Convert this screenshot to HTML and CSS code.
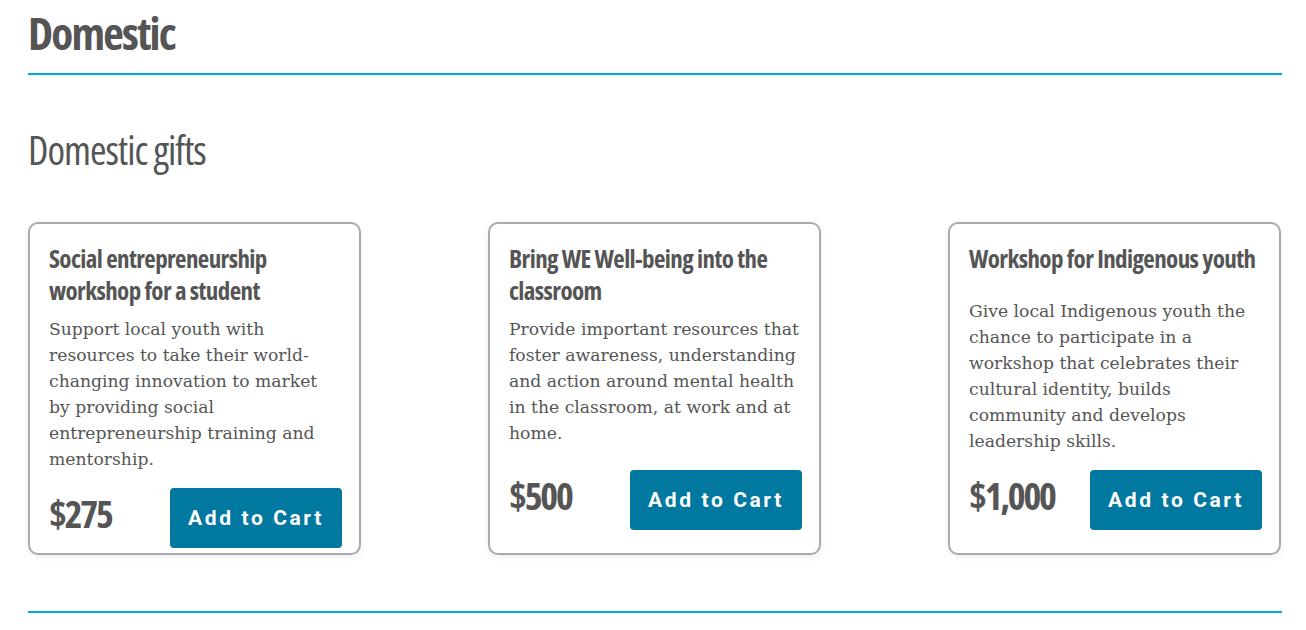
FILE: index.html
```html
<!DOCTYPE html>
<html lang="en">
<head>
    <meta charset="UTF-8">
    <meta name="viewport" content="width=device-width, initial-scale=1.0">
    <title>Domestic gifts</title>
    <link rel="stylesheet" href="styles.css">
</head>
<body>
    <div class="gifts-page">
        <h1 class="section-title">Domestic</h1>

        <h2 class="group-title">Domestic gifts</h2>

        <div class="gift-list">
            <div class="gift-card">
                <div class="gift-body">
                    <h3>Social entrepreneurship workshop for a student</h3>
                    <p>Support local youth with resources to take their world-changing innovation to market by providing social entrepreneurship training and mentorship.</p>
                </div>
                <div class="gift-footer">
                    <span class="price">$275</span>
                    <button class="add-btn">Add to Cart</button>
                </div>
            </div>

            <div class="gift-card">
                <div class="gift-body">
                    <h3>Bring WE Well-being into the classroom</h3>
                    <p>Provide important resources that foster awareness, understanding and action around mental health in the classroom, at work and at home.</p>
                </div>
                <div class="gift-footer">
                    <span class="price">$500</span>
                    <button class="add-btn">Add to Cart</button>
                </div>
            </div>

            <div class="gift-card">
                <div class="gift-body short-title">
                    <h3>Workshop for Indigenous youth</h3>
                    <p>Give local Indigenous youth the chance to participate in a workshop that celebrates their cultural identity, builds community and develops leadership skills.</p>
                </div>
                <div class="gift-footer">
                    <span class="price">$1,000</span>
                    <button class="add-btn">Add to Cart</button>
                </div>
            </div>
        </div>

        <div class="section-end"></div>
    </div>
</body>
</html>
```

FILE: styles.css
```css
body {
    margin: 0;
    font-family: "DejaVu Serif", serif;
    color: #555;
    background: #fff;
}
.gifts-page {
    padding: 0 24px 0 28px;
}
.section-title,
.group-title,
.gift-body h3,
.price {
    font-family: "Open Sans", sans-serif;
    font-stretch: 75%;
}
.section-title {
    margin: 0;
    padding: 6px 0 13px;
    font-size: 45px;
    font-weight: bold;
    line-height: 54px;
    letter-spacing: -1.8px;
    border-bottom: 2px solid #00a9e0;
}
.group-title {
    margin: 0;
    padding-top: 50px;
    font-size: 40px;
    font-weight: normal;
    line-height: 50px;
    letter-spacing: -1px;
}
.gift-list {
    display: flex;
    gap: 127px;
    margin-top: 47px;
}
.gift-card {
    width: 333px;
    box-sizing: border-box;
    border: 2px solid #aaa;
    border-radius: 10px;
    box-shadow: 0 2px 6px rgba(0,0,0,0.08);
    padding: 18px 17px 5px 19px;
}
.gift-body {
    min-height: 212px;
}
.gift-body h3 {
    margin: 0;
    font-size: 25px;
    font-weight: bold;
    line-height: 32px;
    letter-spacing: -0.6px;
}
.gift-body p {
    margin: 10px 0 0;
    font-size: 17.2px;
    line-height: 26px;
}
.short-title p {
    margin-top: 24px;
}
.gift-footer {
    display: flex;
    justify-content: space-between;
    align-items: center;
    margin-top: 16px;
}
.price {
    font-size: 38px;
    font-weight: bold;
    line-height: 40px;
    letter-spacing: -2.2px;
    margin-bottom: 10px;
}
.add-btn {
    width: 172px;
    height: 60px;
    background-color: #00789f;
    color: white;
    border: none;
    border-radius: 4px;
    font-family: Roboto, "Liberation Sans", sans-serif;
    font-size: 21px;
    font-weight: bold;
    letter-spacing: 2.6px;
    cursor: pointer;
}
.section-end {
    margin-top: 56px;
    border-top: 2px solid #00a9e0;
}
```
